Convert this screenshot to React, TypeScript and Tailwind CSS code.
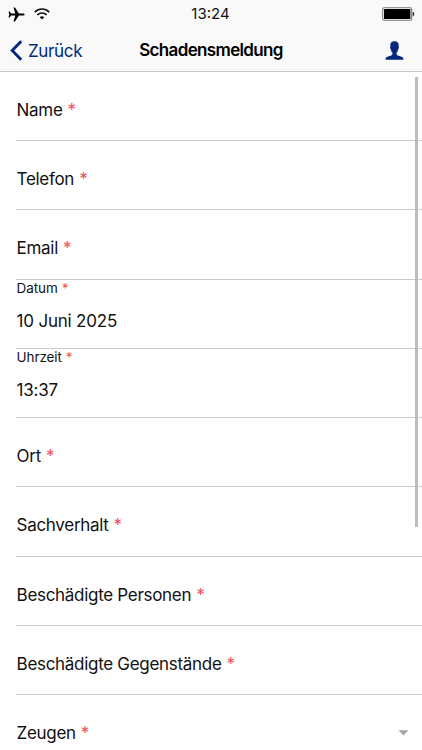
type Field = {
  label: string;
  value?: string;
  select?: boolean;
};

const FIELDS: Field[] = [
  { label: "Name" },
  { label: "Telefon" },
  { label: "Email" },
  { label: "Datum", value: "10 Juni 2025" },
  { label: "Uhrzeit", value: "13:37" },
  { label: "Ort" },
  { label: "Sachverhalt" },
  { label: "Beschädigte Personen" },
  { label: "Beschädigte Gegenstände" },
  { label: "Zeugen", select: true },
];

function PlaneIcon() {
  return (
    <svg width="17" height="15" viewBox="0 0 17 15" fill="#000" aria-hidden="true">
      <path d="M16.6 7.5c0 .6-.8 1-1.700 1h-4L7 14.400H5.500L7.300 8.600H3L1.700 10.500H.6L1.200 7.500.6 4.500h1.100L3 6.400h4.300L5.500.600H7l3.900 5.900h4c.9 0 1.700.4 1.700 1z" />
    </svg>
  );
}

function WifiIcon() {
  return (
    <svg width="16" height="12" viewBox="0 0 16 12" fill="none" stroke="#111" strokeWidth="1.5" aria-hidden="true">
      <path d="M.8 4.100a10.200 10.200 0 0 1 14.400 0" />
      <path d="M3.300 6.900a6.700 6.700 0 0 1 9.400 0" />
      <path d="M8 11.600 5.700 9.200a3.400 3.400 0 0 1 4.600 0z" fill="#111" stroke="none" />
    </svg>
  );
}

function BatteryIcon() {
  return (
    <svg width="33" height="14" viewBox="0 0 33 14" aria-hidden="true">
      <rect x=".7" y=".7" width="29" height="12.600" rx="1.500" fill="#fff" stroke="#777" strokeWidth="1.100" />
      <rect x="2" y="2" width="26.400" height="10" rx=".6" fill="#000" />
      <path d="M30.700 4.700c1.100.2 1.600 1.100 1.600 2.300s-.5 2.100-1.600 2.300z" fill="#333" />
    </svg>
  );
}

function PersonIcon() {
  return (
    <svg width="19" height="19" viewBox="0 0 19 19" fill="#02297d" aria-hidden="true">
      <path d="M9.500.2c2.700 0 4.200 1.500 4.200 4 0 .6 0 1-.1 1.500.5.200.5 1.500-.3 2.200-.3 1.700-.9 2.900-1.700 3.700v1.700c.3 1 1.600 1.500 3.400 2 2.400.6 3.400 1.200 3.500 3.400H.5c.1-2.200 1.100-2.800 3.500-3.400 1.800-.5 3.100-1 3.400-2v-1.700C6.600 10.800 6 9.600 5.700 7.900c-.8-.7-.8-2-.3-2.200-.1-.5-.1-.9-.1-1.500 0-2.500 1.500-4 4.200-4z" />
    </svg>
  );
}

function Required({ small }: { small?: boolean }) {
  return <span className={small ? "ml-1 text-[#f04e57]" : "ml-[5px] text-[#f04e57]"}>*</span>;
}

function FieldRow({ label, value, select }: Field) {
  return (
    <div className="ml-4 h-[69.25px] shrink-0 border-b border-[#c9c9cb] pl-[0.6px]">
      {value ? (
        <>
          <div className="text-[13.5px] leading-4 tracking-[-0.1px]">
            {label}
            <Required small />
          </div>
          <div className="mt-[13px] text-[17px] leading-6 tracking-[-0.2px]">{value}</div>
        </>
      ) : (
        <div className="flex items-center justify-between pt-[26px] pr-[13px] text-[17px] leading-6 tracking-[-0.3px]">
          <span>
            {label}
            <Required />
          </span>
          {select && (
            <svg width="11" height="6" viewBox="0 0 11 6" fill="#a6a6a6" aria-hidden="true">
              <path d="M.5.300h10L5.500 5.500z" />
            </svg>
          )}
        </div>
      )}
    </div>
  );
}

export default function App() {
  return (
    <div className="relative flex h-[750px] w-[422px] flex-col overflow-hidden bg-white font-['Inter','Liberation_Sans',sans-serif] text-[#111]">
      <header className="h-[71.8px] shrink-0 border-b border-[#c8c8ca] bg-[#f9f9f9]">
        <div className="grid h-7 grid-cols-3 items-center pr-[7px] pl-2">
          <div className="flex items-center gap-[9px]">
            <PlaneIcon />
            <WifiIcon />
          </div>
          <div className="pr-0.5 text-center text-[15px] leading-5">13:24</div>
          <div className="flex justify-end">
            <BatteryIcon />
          </div>
        </div>
        <div className="grid h-[43px] grid-cols-[1fr_auto_1fr] items-center pt-0.5 pr-[18px] pl-[10px]">
          <button className="flex items-center gap-[5px] text-[17px] tracking-[-0.35px] text-[#02297d]">
            <svg width="13" height="21" viewBox="0 0 13 21" fill="none" stroke="#02297d" strokeWidth="2.9" aria-hidden="true">
              <path d="M11.200 1.200 2.200 10.500l9 9.300" />
            </svg>
            <span className="pt-0.5">Zurück</span>
          </button>
          <h1 className="pt-px pl-2 text-[17px] font-semibold tracking-[-0.65px] text-black">Schadensmeldung</h1>
          <button className="flex justify-end" aria-label="Profil">
            <PersonIcon />
          </button>
        </div>
      </header>

      <main className="flex min-h-0 flex-1 flex-col overflow-hidden">
        {FIELDS.map((field) => (
          <FieldRow key={field.label} {...field} />
        ))}
      </main>

      {/* scroll indicator floats above the form */}
      <div className="absolute top-[77px] right-[4px] h-[450px] w-[3px] bg-[#bdbdbd]" />
    </div>
  );
}
